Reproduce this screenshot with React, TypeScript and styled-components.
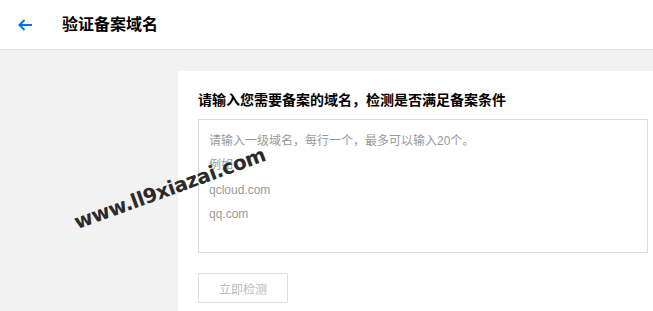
import React from "react";
import styled, { createGlobalStyle } from "styled-components";

const Global = createGlobalStyle`
  html, body { margin: 0; padding: 0; background: #f2f2f2; }
  body { font-family: "Liberation Sans", "Noto Sans CJK SC", sans-serif; }
  * { box-sizing: border-box; }
`;

const Page = styled.div`
  position: relative;
  width: 653px;
  height: 311px;
  overflow: hidden;
  background: #f2f2f2;
  display: flex;
  flex-direction: column;
`;

const Header = styled.header`
  height: 50px;
  flex: none;
  background: #fff;
  border-bottom: 1px solid #e3e3e3;
  display: flex;
  align-items: center;
  padding-left: 18px;
`;

const BackButton = styled.button`
  border: 0;
  background: none;
  padding: 0;
  width: 15px;
  height: 14px;
  display: flex;
  align-items: center;
  cursor: pointer;
  margin-right: 29px;
`;

const HeaderTitle = styled.h1`
  margin: 0;
  font-size: 16px;
  font-weight: 700;
  color: #000;
  line-height: 20px;
  font-family: "Liberation Sans", "Noto Sans CJK SC", sans-serif;
`;

const Main = styled.main`
  flex: 1;
  display: flex;
  padding: 21px 0 0 178px;
`;

const Card = styled.section`
  flex: 1;
  background: #fff;
  padding: 19px 5px 0 20px;
  display: flex;
  flex-direction: column;
  align-items: flex-start;
`;

const CardTitle = styled.h2`
  margin: 0 0 9px;
  font-size: 14px;
  line-height: 20px;
  font-weight: 700;
  color: #000;
`;

const DomainInput = styled.textarea`
  width: 450px;
  height: 134px;
  border: 1px solid #dcdcdc;
  padding: 9px 10px;
  font-size: 12px;
  line-height: 24.4px;
  font-family: "Liberation Sans", "Noto Sans CJK SC", sans-serif;
  resize: none;
  outline: none;
  color: #333;
  &::placeholder { color: #999; opacity: 1; }
`;

const CheckButton = styled.button`
  margin-top: 20px;
  width: 90px;
  height: 30px;
  border: 1px solid #dddddd;
  background: #fff;
  color: #bbb;
  font-size: 12px;
  font-family: "Liberation Sans", "Noto Sans CJK SC", sans-serif;
  cursor: not-allowed;
`;

const Watermark = styled.div`
  position: absolute;
  left: 79px;
  top: 210px;
  font-family: "DejaVu Sans", "Liberation Sans", sans-serif;
  font-weight: 700;
  font-size: 20px;
  letter-spacing: -0.4px;
  line-height: 24px;
  color: #2b2b2b;
  transform: rotate(-20deg);
  transform-origin: left bottom;
  white-space: nowrap;
  pointer-events: none;
`;

export default function App() {
  return (
    <>
      <Global />
      <Page>
        <Header>
          <BackButton aria-label="返回">
            <svg width="15" height="12" viewBox="0 0 15 12" fill="none">
              <path d="M14 6H1.8M6.5 1L1.5 6L6.5 11" stroke="#006eff" strokeWidth="2" />
            </svg>
          </BackButton>
          <HeaderTitle>验证备案域名</HeaderTitle>
        </Header>
        <Main>
          <Card>
            <CardTitle>请输入您需要备案的域名，检测是否满足备案条件</CardTitle>
            <DomainInput
              placeholder={"请输入一级域名，每行一个，最多可以输入20个。\n例如\nqcloud.com\nqq.com"}
            />
            <CheckButton disabled>立即检测</CheckButton>
          </Card>
        </Main>
        <Watermark>www.ll9xiazai.com</Watermark>
      </Page>
    </>
  );
}
